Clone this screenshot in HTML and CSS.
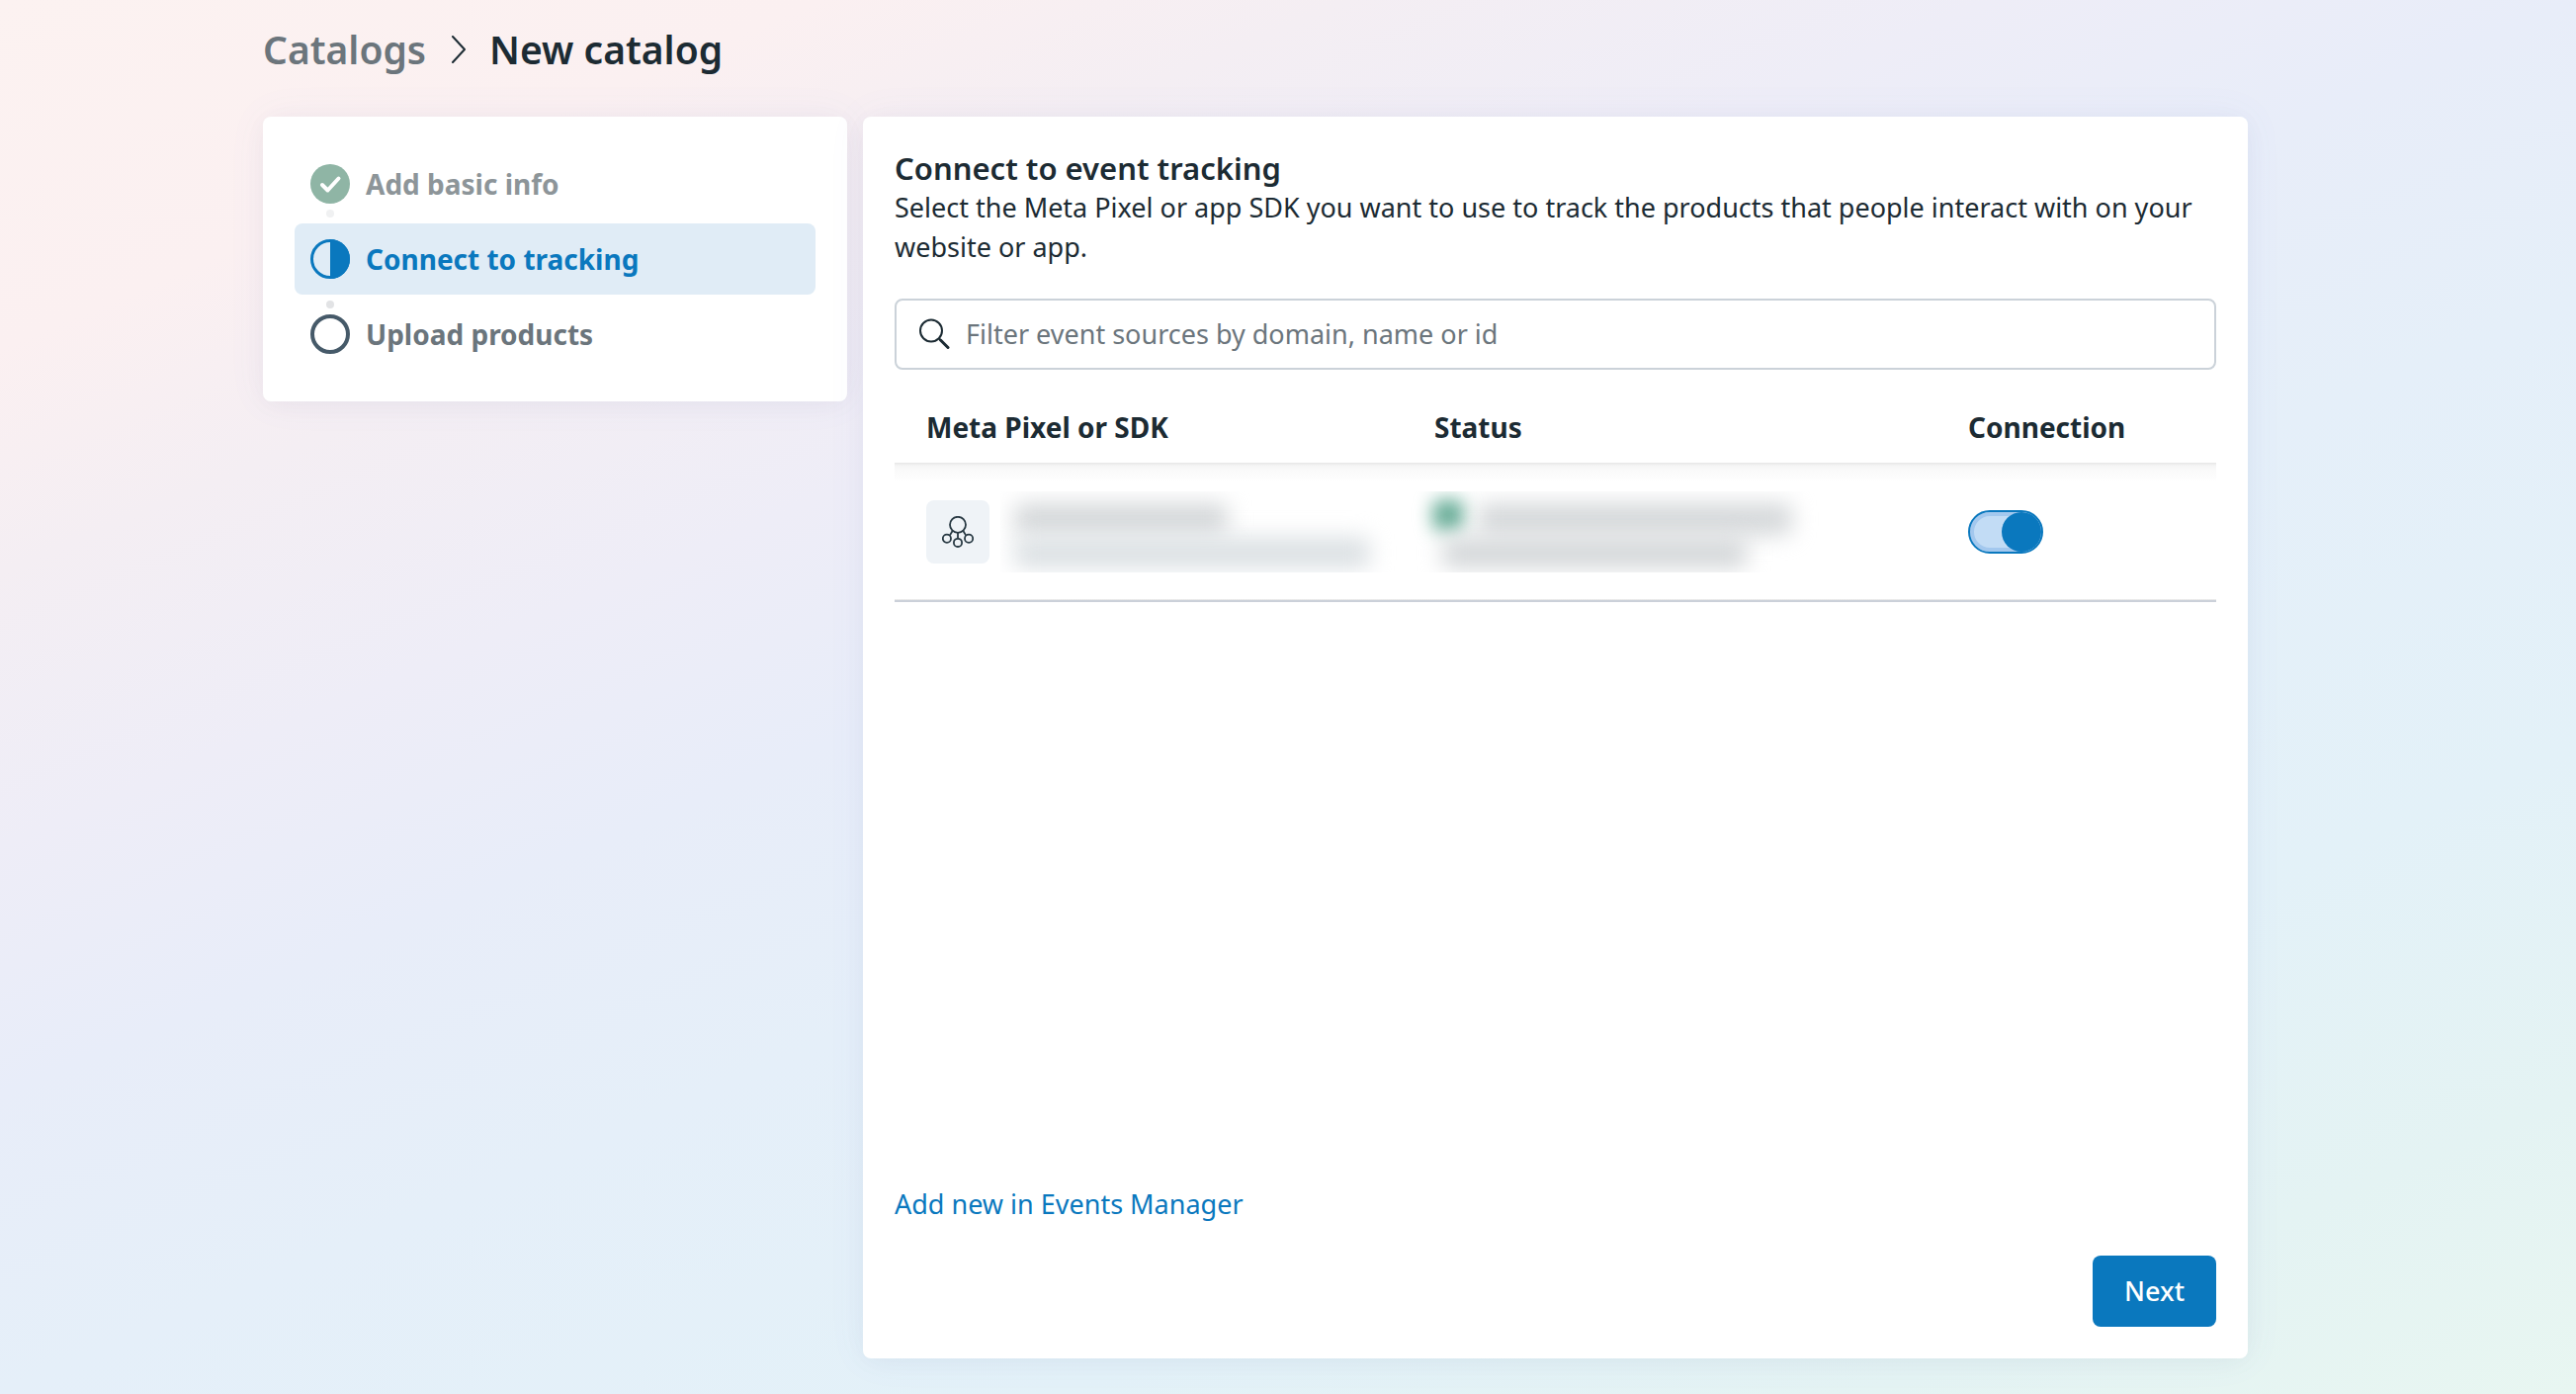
FILE: index.html
```html
<!DOCTYPE html>
<html lang="en">
<head>
    <meta charset="UTF-8">
    <meta name="viewport" content="width=device-width, initial-scale=1.0">
    <title>New catalog</title>
    <link rel="stylesheet" href="styles.css">
</head>
<body>

<div class="page">
    <nav class="breadcrumb" aria-label="Breadcrumb">
        <a href="#">Catalogs</a>
        <svg class="chevron" viewBox="0 0 16 28" aria-hidden="true">
            <path d="M3 1 L15 14 L3 27" fill="none" stroke="#1c2b33" stroke-width="2" stroke-linecap="round" stroke-linejoin="round"/>
        </svg>
        <h1>New catalog</h1>
    </nav>

    <div class="layout">
        <!-- Steps -->
        <aside class="card steps-card">
            <ol class="steps">
                <li class="step done">
                    <svg class="step-icon" viewBox="0 0 40 40" aria-hidden="true">
                        <circle cx="20" cy="20" r="20" fill="#8fb5a5"/>
                        <path d="M12 21 L17.5 26.5 L28.5 14.5" fill="none" stroke="#fff" stroke-width="4" stroke-linecap="round" stroke-linejoin="round"/>
                    </svg>
                    <span>Add basic info</span>
                </li>
                <li class="step active" aria-current="step">
                    <svg class="step-icon" viewBox="0 0 40 40" aria-hidden="true">
                        <circle cx="20" cy="20" r="18.5" fill="none" stroke="#0a78be" stroke-width="3"/>
                        <path d="M20 0 A20 20 0 0 1 20 40 Z" fill="#0a78be"/>
                    </svg>
                    <span>Connect to tracking</span>
                </li>
                <li class="step">
                    <svg class="step-icon" viewBox="0 0 40 40" aria-hidden="true">
                        <circle cx="20" cy="20" r="18" fill="none" stroke="#465a69" stroke-width="4"/>
                    </svg>
                    <span>Upload products</span>
                </li>
            </ol>
        </aside>

        <!-- Event tracking -->
        <main class="card content">
            <h2>Connect to event tracking</h2>
            <p class="description">Select the Meta Pixel or app SDK you want to use to track the products that people interact with on your website or app.</p>

            <label class="search">
                <svg class="search-icon" viewBox="0 0 32 32" aria-hidden="true">
                    <circle cx="13" cy="12.5" r="11" fill="none" stroke="#1c2b33" stroke-width="2"/>
                    <path d="M21 20.5 L22.5 22" stroke="#1c2b33" stroke-width="2"/>
                    <path d="M22.5 22 L30 29.5" stroke="#1c2b33" stroke-width="3" stroke-linecap="round"/>
                </svg>
                <input type="text" placeholder="Filter event sources by domain, name or id" aria-label="Filter event sources">
            </label>

            <table class="sources">
                <thead>
                    <tr>
                        <th class="col-source">Meta Pixel or SDK</th>
                        <th class="col-status">Status</th>
                        <th>Connection</th>
                    </tr>
                </thead>
                <tbody>
                    <tr>
                        <td>
                            <div class="source">
                                <div class="source-icon">
                                    <svg viewBox="0 0 32 32" aria-hidden="true">
                                        <g fill="none" stroke="#283943" stroke-width="1.8">
                                            <circle cx="16" cy="8.8" r="8"/>
                                            <circle cx="4.9" cy="22.8" r="4.1"/>
                                            <circle cx="16" cy="26.9" r="4.1"/>
                                            <circle cx="27.1" cy="22.8" r="4.1"/>
                                            <path d="M16 16.8 V22.8 M10.6 15 L7.8 19.6 M21.4 15 L24.2 19.6"/>
                                        </g>
                                    </svg>
                                </div>
                                <div class="redacted redacted-source">
                                    <span class="bar name"></span>
                                    <span class="bar id"></span>
                                </div>
                            </div>
                        </td>
                        <td>
                            <div class="redacted redacted-status">
                                <span class="bar dot"></span>
                                <span class="bar state"></span>
                                <span class="bar time"></span>
                            </div>
                        </td>
                        <td><input class="toggle" type="checkbox" role="switch" aria-label="Connection" checked></td>
                    </tr>
                </tbody>
            </table>

            <footer>
                <a class="add-link" href="#">Add new in Events Manager</a>
                <button type="button">Next</button>
            </footer>
        </main>
    </div>
</div>

</body>
</html>
```
FILE: styles.css
```css
* {
    box-sizing: border-box;
}
body {
    margin: 0;
    min-height: 100vh;
    font-family: "Noto Sans", sans-serif;
    font-size: 27px;
    line-height: 40px;
    color: #1c2b33;
    background: linear-gradient(157deg, #fcf2f1 0%, #fbf0f1 14%, #f4eef3 23%, #eeedf7 34%, #e8edf9 44%, #e5eff9 56%, #e3f1f8 74%, #e4f3f3 88%, #e8f6f1 100%);
}
h1, h2, p, ol {
    margin: 0;
    padding: 0;
}
.page {
    display: flex;
    flex-direction: column;
    min-height: 100vh;
    padding: 22px 332px 36px 266px;
}
/* Breadcrumb */
.breadcrumb {
    display: flex;
    align-items: center;
    gap: 24px;
    height: 56px;
    margin-bottom: 40px;
    font-size: 39px;
    font-weight: 600;
}
.breadcrumb a {
    color: #6b757c;
    text-decoration: none;
}
.breadcrumb h1 {
    font-size: 39px;
    font-weight: 600;
}
.chevron {
    width: 16px;
    height: 28px;
}
/* Cards */
.layout {
    display: grid;
    grid-template-columns: minmax(0, 591px) 1fr;
    gap: 16px;
    flex: 1;
}
.card {
    background: #fff;
    border-radius: 8px;
    box-shadow: 0 0 40px rgba(100, 120, 220, 0.06), 0 4px 24px rgba(0, 0, 0, 0.03);
}
/* Steps */
.steps-card {
    align-self: start;
    padding: 32px;
}
.steps {
    display: flex;
    flex-direction: column;
    gap: 4px;
    list-style: none;
}
.step {
    position: relative;
    display: flex;
    align-items: center;
    gap: 16px;
    height: 72px;
    padding: 0 16px;
    border-radius: 8px;
    font-size: 28px;
    font-weight: 700;
    color: #6b757c;
}
.step + .step::before {
    content: "";
    position: absolute;
    top: 2px;
    left: 32px;
    width: 8px;
    height: 8px;
    border-radius: 50%;
    background: #e2e3e5;
}
.step.done {
    color: #8d9599;
}
.step.active {
    color: #0a78be;
    background: #e0ecf6;
}
.step + .step.active::before {
    top: -14px;
    background: #f0f1f2;
}
.step-icon {
    width: 40px;
    height: 40px;
}
/* Content */
.content {
    display: flex;
    flex-direction: column;
    padding: 32px;
}
h2 {
    font-size: 31px;
    font-weight: 600;
}
.description {
    margin-bottom: 32px;
}
.search {
    display: flex;
    align-items: center;
    gap: 16px;
    height: 72px;
    padding: 0 22px;
    border: 2px solid #cbd2d9;
    border-radius: 8px;
}
.search-icon {
    width: 32px;
    height: 32px;
}
.search input {
    flex: 1;
    padding: 0;
    border: 0;
    outline: 0;
    background: none;
    font: inherit;
}
.search input::placeholder {
    color: #6b757c;
}
/* Table */
.sources {
    width: 100%;
    margin-top: 22px;
    table-layout: fixed;
    border-collapse: collapse;
}
.sources th {
    height: 72px;
    padding: 0 32px;
    text-align: left;
    font-size: 28px;
    font-weight: 700;
}
.col-source {
    width: 514px;
}
.col-status {
    width: 540px;
}
.sources tbody tr {
    background: linear-gradient(#e6e6e6 0, #f5f5f5 3px, #fafafa 8px, #fff 20px);
    border-bottom: 2px solid #cbd0d9;
}
.sources td {
    height: 140px;
    padding: 0 0 0 32px;
}
.source {
    display: flex;
    align-items: center;
    gap: 11px;
}
.source-icon {
    display: flex;
    align-items: center;
    justify-content: center;
    width: 64px;
    height: 64px;
    border-radius: 8px;
    background: #eff3f7;
}
.source-icon svg {
    width: 32px;
    height: 32px;
}
/* Hidden account details */
.redacted {
    position: relative;
    height: 82px;
    overflow: hidden;
}
.redacted-source {
    flex: 1;
}
.redacted-status {
    margin-left: -32px;
}
.bar {
    position: absolute;
    height: 32px;
    border-radius: 8px;
    background: #d5d8da;
    filter: blur(11px);
}
.name {
    top: 12px;
    left: 14px;
    width: 216px;
}
.id {
    top: 46px;
    left: 14px;
    width: 360px;
    background: #dce1e4;
}
.dot {
    top: 8px;
    left: 30px;
    width: 32px;
    background: #6aae99;
    filter: blur(9px);
}
.state {
    top: 12px;
    left: 76px;
    width: 318px;
}
.time {
    top: 46px;
    left: 40px;
    width: 308px;
}
/* Switch */
.toggle {
    display: block;
    width: 76px;
    height: 44px;
    margin: 0;
    appearance: none;
    border: 2px solid #0a78be;
    border-radius: 22px;
    background: #c2dcf5;
    box-shadow: inset 0 0 0 4px #a3c8ee;
}
.toggle::before {
    content: "";
    display: block;
    width: 40px;
    height: 40px;
    margin-left: auto;
    border-radius: 50%;
    background: #0a78be;
}
/* Footer */
footer {
    display: flex;
    flex-direction: column;
    gap: 32px;
    margin-top: auto;
}
.add-link {
    align-self: flex-start;
    color: #0a78be;
    text-decoration: none;
}
footer button {
    align-self: flex-end;
    height: 72px;
    padding: 0 32px;
    border: 0;
    border-radius: 8px;
    background: #0a78be;
    color: #fff;
    font: inherit;
    font-weight: 500;
}
```
